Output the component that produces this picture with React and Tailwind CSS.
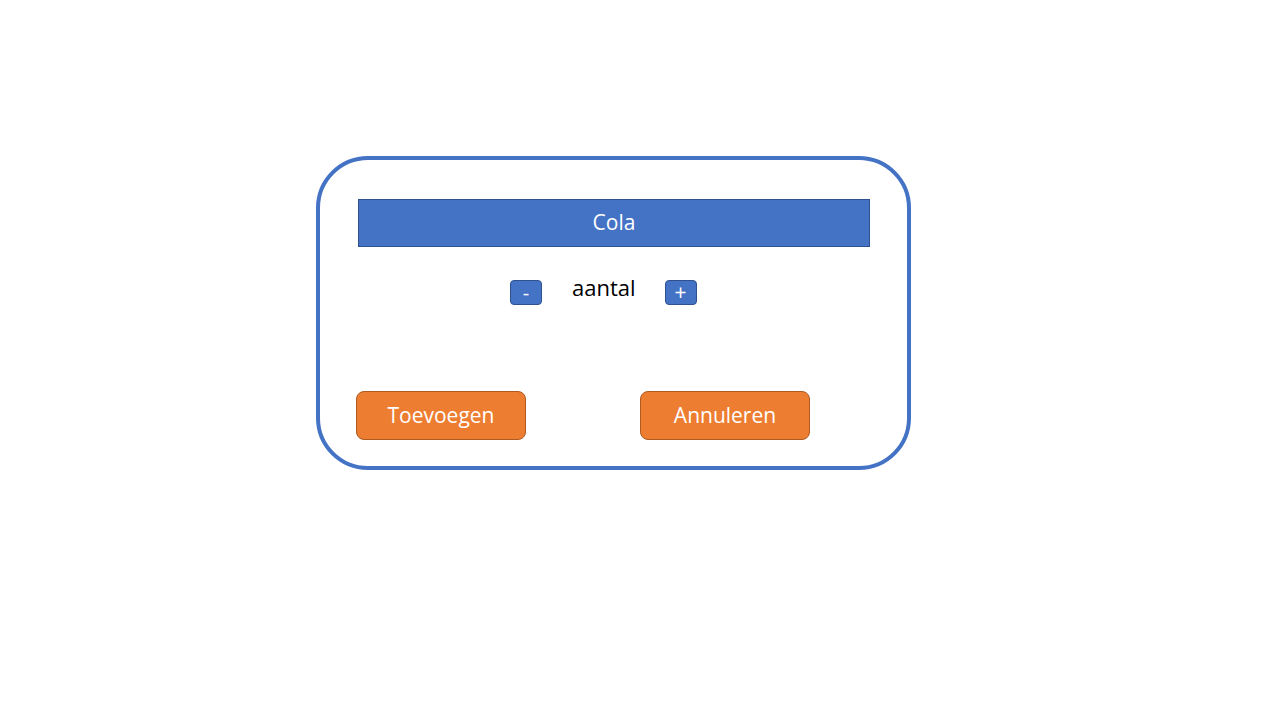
export default function App() {
  return (
    <div className="w-[1280px] h-[720px] bg-white pt-[156px] pl-[316px]" style={{ fontFamily: '"Open Sans", "Liberation Sans", sans-serif' }}>
      <div className="w-[595px] h-[314px] border-4 border-[#4472c4] rounded-[52px] pl-[38px] pt-[39px] flex flex-col">
        <div className="w-[512px] h-[48px] bg-[#4472c4] border border-[#2f528f] flex items-center justify-center text-white text-[21px]">
          Cola
        </div>
        <div className="flex items-start mt-[33px] pl-[152px]">
          <button className="w-[32px] h-[25px] bg-[#4472c4] border border-[#2f528f] rounded-[4px] text-white text-[20px] leading-none flex items-center justify-center">
            -
          </button>
          <span className="ml-[30px] text-[22px] leading-none -mt-[4px] text-black">aantal</span>
          <button className="ml-[29px] w-[32px] h-[25px] bg-[#4472c4] border border-[#2f528f] rounded-[4px] text-white text-[21px] leading-none flex items-center justify-center">
            +
          </button>
        </div>
        <div className="flex mt-[86px] -ml-[2px]">
          <button className="w-[170px] h-[49px] bg-[#ed7d31] border border-[#ae5a21] rounded-[8px] text-white text-[21px]">
            Toevoegen
          </button>
          <button className="ml-[114px] w-[170px] h-[49px] bg-[#ed7d31] border border-[#ae5a21] rounded-[8px] text-white text-[21px]">
            Annuleren
          </button>
        </div>
      </div>
    </div>
  );
}
